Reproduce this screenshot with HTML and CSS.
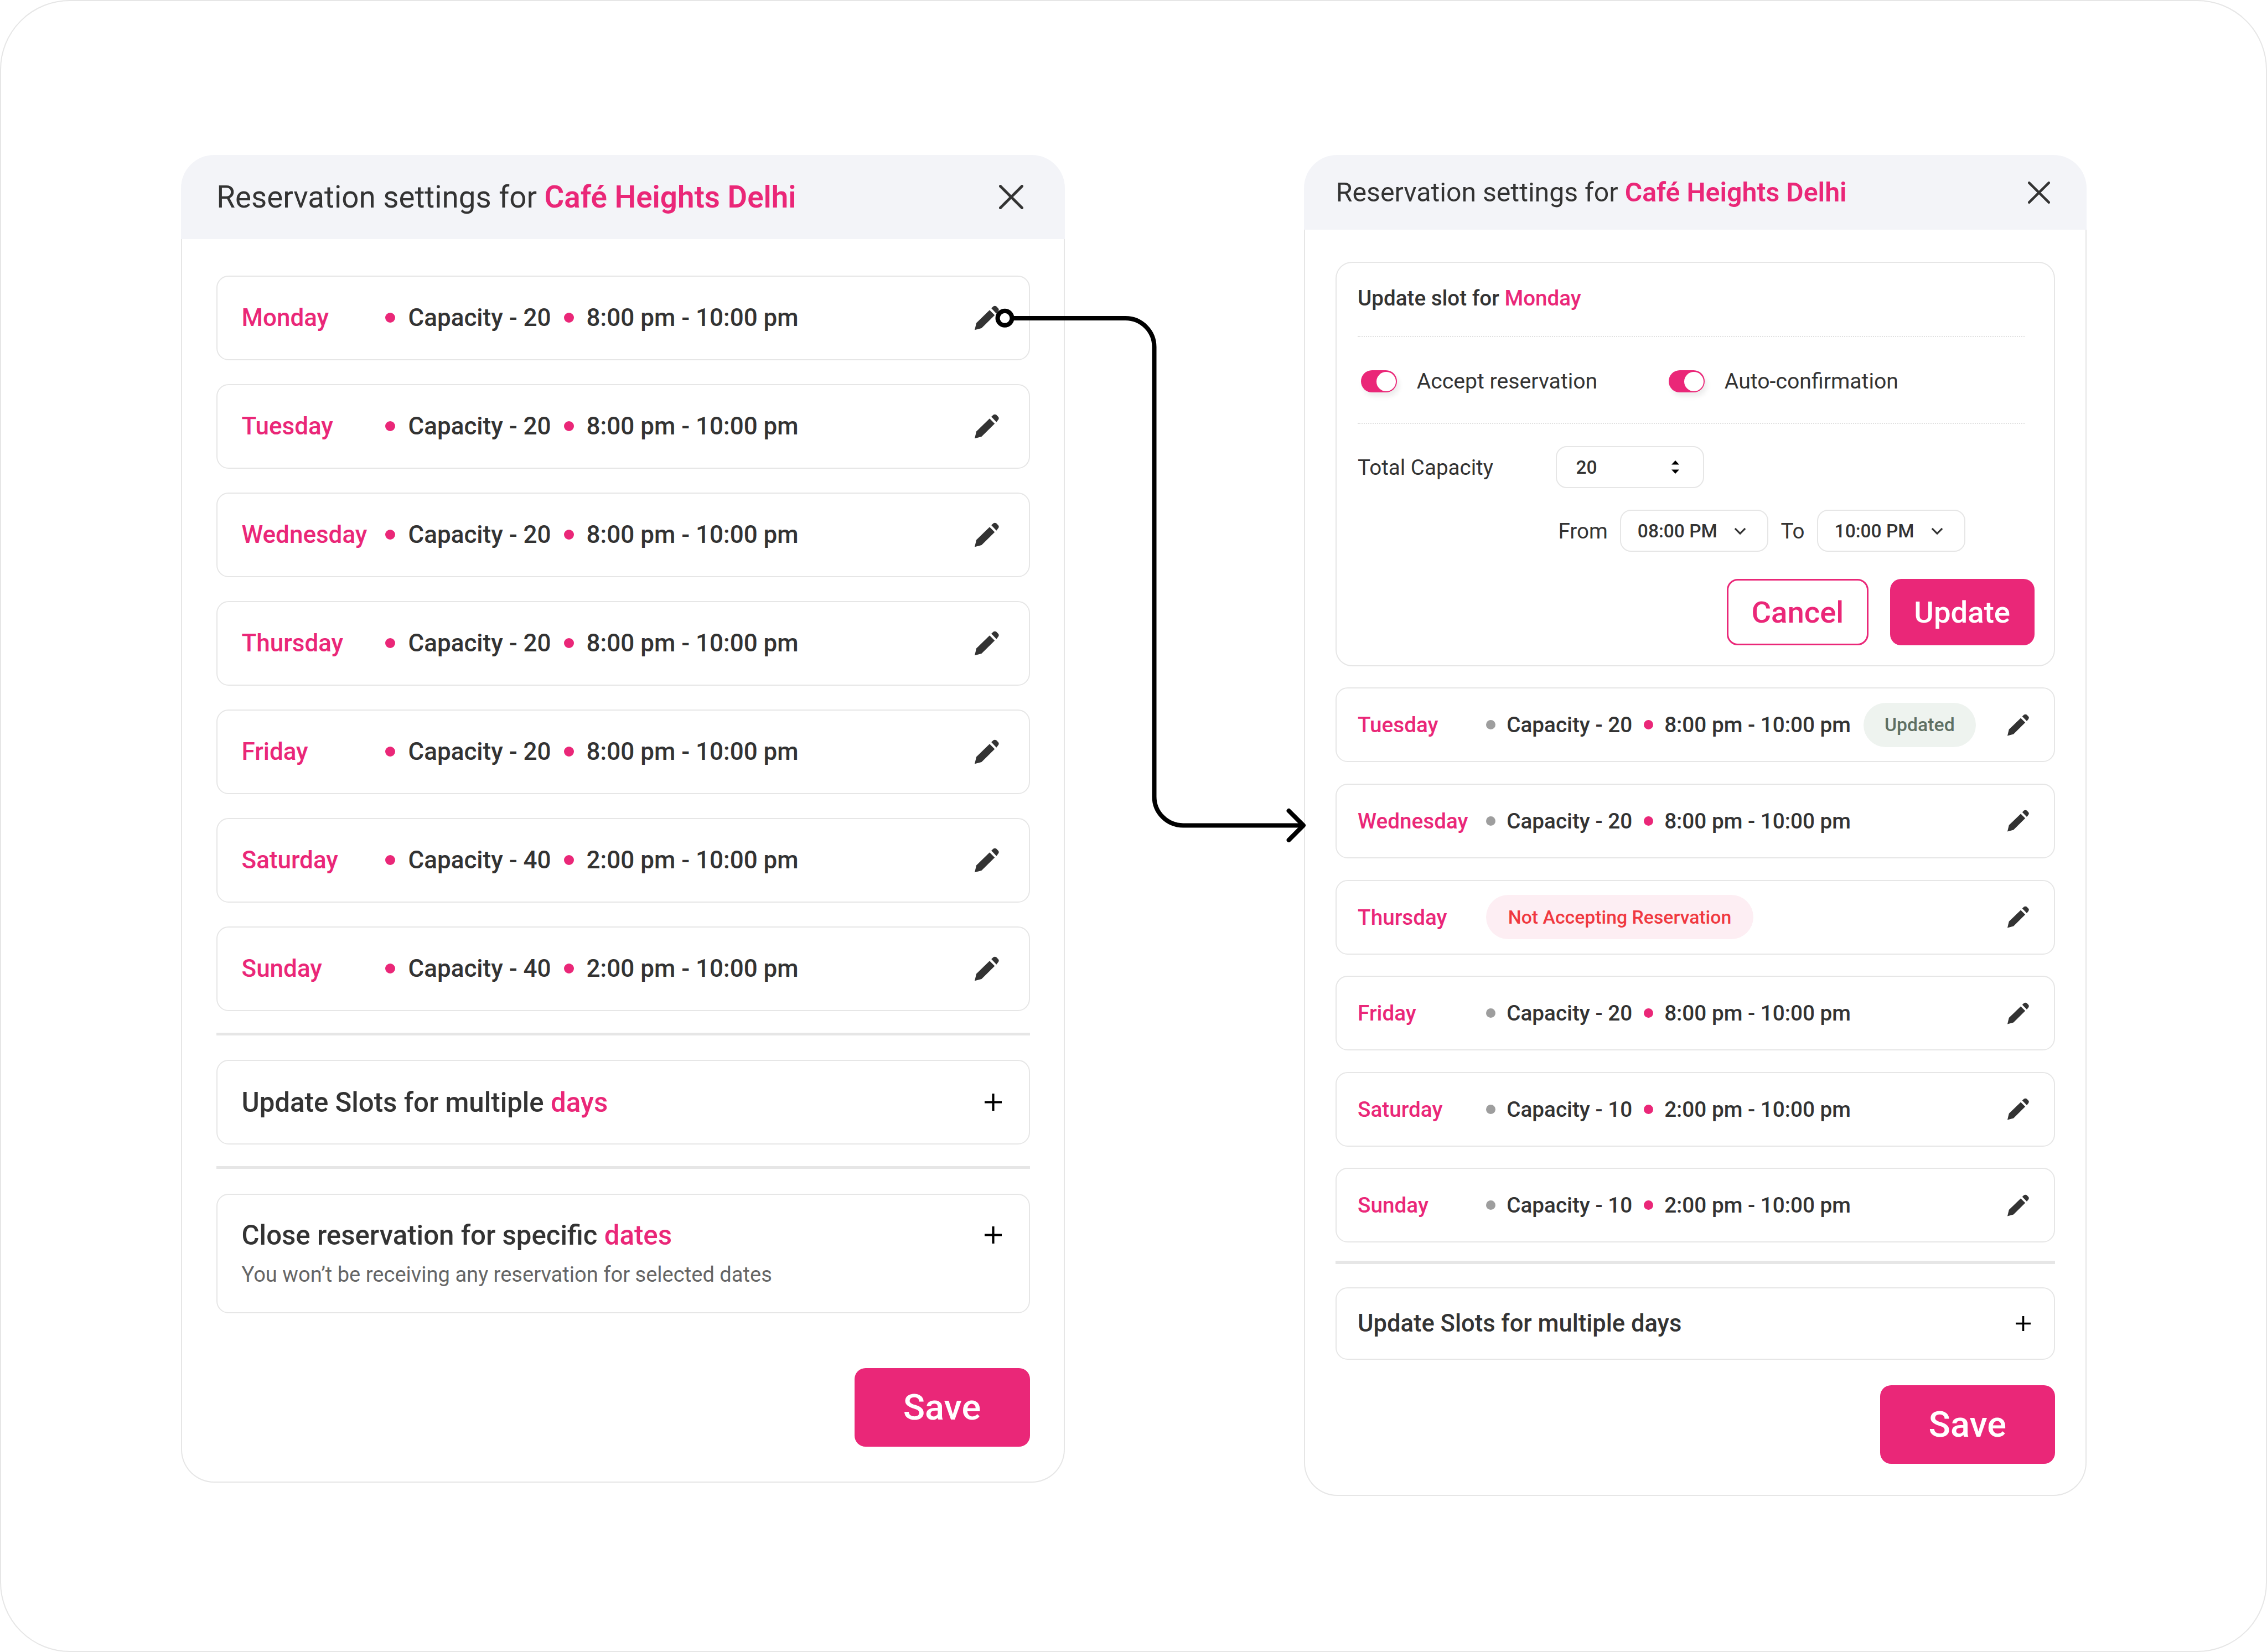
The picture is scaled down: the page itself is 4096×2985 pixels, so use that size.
FILE: index.html
```html
<!DOCTYPE html>
<html lang="en">
<head>
  <meta charset="UTF-8" />
  <meta name="viewport" content="width=device-width, initial-scale=1.0" />
  <title>Reservation settings</title>
  <link rel="stylesheet" href="styles.css">
</head>
<body>
  <svg width="0" height="0" class="defs">
    <symbol id="pencil" viewBox="83 25 200 200">
      <path d="M83 222 L97 165 L203 62 L244 103 L138 207 Z" />
      <path d="M217 47 L232 33 Q245 24 258 33 L272 47 Q282 59 272 72 L258 90 Z" />
    </symbol>
    <symbol id="close" viewBox="0 0 44 44">
      <path d="M2.5 2.5 L41.5 41.5 M41.5 2.5 L2.5 41.5" />
    </symbol>
    <symbol id="plus" viewBox="0 0 30 30">
      <path d="M15 0 V30 M0 15 H30" />
    </symbol>
    <symbol id="chevron" viewBox="0 0 24 14">
      <path d="M2 2 L12 12 L22 2" />
    </symbol>
  </svg>

  <div class="frame">
    <!-- first dialog -->
    <section class="card card-large">
      <header class="card-head">
        <h2>Reservation settings for <b>Café Heights Delhi</b></h2>
        <svg class="icon-close"><use href="#close" /></svg>
      </header>
      <div class="card-body">
        <div class="slots">
          <div class="slot"><span class="day">Monday</span><i class="dot"></i><span>Capacity - 20</span><i class="dot"></i><span>8:00 pm - 10:00 pm</span><svg class="icon-edit"><use href="#pencil" /></svg></div>
          <div class="slot"><span class="day">Tuesday</span><i class="dot"></i><span>Capacity - 20</span><i class="dot"></i><span>8:00 pm - 10:00 pm</span><svg class="icon-edit"><use href="#pencil" /></svg></div>
          <div class="slot"><span class="day">Wednesday</span><i class="dot"></i><span>Capacity - 20</span><i class="dot"></i><span>8:00 pm - 10:00 pm</span><svg class="icon-edit"><use href="#pencil" /></svg></div>
          <div class="slot"><span class="day">Thursday</span><i class="dot"></i><span>Capacity - 20</span><i class="dot"></i><span>8:00 pm - 10:00 pm</span><svg class="icon-edit"><use href="#pencil" /></svg></div>
          <div class="slot"><span class="day">Friday</span><i class="dot"></i><span>Capacity - 20</span><i class="dot"></i><span>8:00 pm - 10:00 pm</span><svg class="icon-edit"><use href="#pencil" /></svg></div>
          <div class="slot"><span class="day">Saturday</span><i class="dot"></i><span>Capacity - 40</span><i class="dot"></i><span>2:00 pm - 10:00 pm</span><svg class="icon-edit"><use href="#pencil" /></svg></div>
          <div class="slot"><span class="day">Sunday</span><i class="dot"></i><span>Capacity - 40</span><i class="dot"></i><span>2:00 pm - 10:00 pm</span><svg class="icon-edit"><use href="#pencil" /></svg></div>
        </div>
        <hr class="divider">
        <div class="slot">
          <span class="row-title">Update Slots for multiple <em>days</em></span>
          <svg class="icon-plus"><use href="#plus" /></svg>
        </div>
        <hr class="divider">
        <div class="slot slot-tall">
          <div class="tall-top">
            <span class="row-title">Close reservation for specific <em>dates</em></span>
            <svg class="icon-plus"><use href="#plus" /></svg>
          </div>
          <p class="row-sub">You won’t be receiving any reservation for selected dates</p>
        </div>
        <div class="save-bar"><button class="btn btn-save">Save</button></div>
      </div>
    </section>

    <!-- second dialog -->
    <section class="card card-small">
      <header class="card-head">
        <h2>Reservation settings for <b>Café Heights Delhi</b></h2>
        <svg class="icon-close"><use href="#close" /></svg>
      </header>
      <div class="card-body">
        <div class="panel">
          <div class="panel-title">Update slot for <em>Monday</em></div>
          <div class="dotted"></div>
          <div class="toggles">
            <div class="toggle-item"><span class="toggle"></span>Accept reservation</div>
            <div class="toggle-item"><span class="toggle"></span>Auto-confirmation</div>
          </div>
          <div class="dotted dotted-low"></div>
          <div class="capacity-row">
            <span class="capacity-label">Total Capacity</span>
            <div class="field field-number">
              <span>20</span>
              <svg class="spinner" viewBox="0 0 14 24"><path d="M7 0 L14 7.5 H0 Z M0 16.5 H14 L7 24 Z" /></svg>
            </div>
          </div>
          <div class="time-row">
            <span>From</span>
            <div class="field"><span>08:00 PM</span><svg class="icon-chevron"><use href="#chevron" /></svg></div>
            <span>To</span>
            <div class="field"><span>10:00 PM</span><svg class="icon-chevron"><use href="#chevron" /></svg></div>
          </div>
          <div class="panel-actions">
            <button class="btn btn-outline">Cancel</button>
            <button class="btn btn-update">Update</button>
          </div>
        </div>

        <div class="slots">
          <div class="slot"><span class="day">Tuesday</span><i class="dot dot-grey"></i><span>Capacity - 20</span><i class="dot"></i><span>8:00 pm - 10:00 pm</span><span class="pill pill-green">Updated</span><svg class="icon-edit"><use href="#pencil" /></svg></div>
          <div class="slot"><span class="day">Wednesday</span><i class="dot dot-grey"></i><span>Capacity - 20</span><i class="dot"></i><span>8:00 pm - 10:00 pm</span><svg class="icon-edit"><use href="#pencil" /></svg></div>
          <div class="slot"><span class="day">Thursday</span><span class="pill pill-red">Not Accepting Reservation</span><svg class="icon-edit"><use href="#pencil" /></svg></div>
          <div class="slot"><span class="day">Friday</span><i class="dot dot-grey"></i><span>Capacity - 20</span><i class="dot"></i><span>8:00 pm - 10:00 pm</span><svg class="icon-edit"><use href="#pencil" /></svg></div>
          <div class="slot"><span class="day">Saturday</span><i class="dot dot-grey"></i><span>Capacity - 10</span><i class="dot"></i><span>2:00 pm - 10:00 pm</span><svg class="icon-edit"><use href="#pencil" /></svg></div>
          <div class="slot"><span class="day">Sunday</span><i class="dot dot-grey"></i><span>Capacity - 10</span><i class="dot"></i><span>2:00 pm - 10:00 pm</span><svg class="icon-edit"><use href="#pencil" /></svg></div>
        </div>
        <hr class="divider">
        <div class="slot slot-multi">
          <span class="row-title">Update Slots for multiple days</span>
          <svg class="icon-plus"><use href="#plus" /></svg>
        </div>
        <div class="save-bar"><button class="btn btn-save">Save</button></div>
      </div>
    </section>

    <!-- connector between the two dialogs -->
    <svg class="connector" viewBox="0 0 4096 2985">
      <circle cx="1816.5" cy="575.8" r="13" />
      <path d="M1830 576 H2034.5 A52 52 0 0 1 2086.5 628 V1440.4 A52 52 0 0 0 2138.5 1492.4 H2355" />
      <path d="M2329.6 1466 L2356 1492.4 L2329.6 1518.8" />
    </svg>
  </div>
</body>
</html>
```

FILE: styles.css
```css
* {
  box-sizing: border-box;
}
body {
  margin: 0;
  background: #ffffff;
  font-family: Roboto, "Liberation Sans", sans-serif;
  color: #333333;
}
.defs {
  position: absolute;
}
em {
  font-style: normal;
  color: #ea2778;
}
.frame {
  position: relative;
  width: 4096px;
  height: 2985px;
  border: 2.7px solid #e6e6e6;
  border-radius: 126px;
  padding: 277.8px 0 0 324.8px;
  display: flex;
  align-items: flex-start;
  gap: 432px;
}
.connector {
  position: absolute;
  left: -2.7px;
  top: -2.7px;
  width: 4096px;
  height: 2985px;
  fill: none;
  stroke: #000000;
  stroke-width: 8px;
  stroke-linecap: round;
  stroke-linejoin: round;
}

/* dialogs */
.card {
  flex: none;
}
.card-large {
  width: 1597.5px;
}
.card-small {
  width: 1413.5px;
}
.card-head {
  display: flex;
  align-items: center;
  justify-content: space-between;
  background: #f3f4f8;
  border-radius: 60px 60px 0 0;
}
.card-head h2 {
  margin: 0;
  font-weight: 400;
}
.card-head b {
  font-weight: 600;
  color: #ea2778;
}
.card-body {
  border: 2.7px solid #e6e6e6;
  border-top: none;
  border-radius: 0 0 60px 60px;
}
.card-large .card-head {
  height: 152.5px;
  padding: 0 75px 0 64.5px;
}
.card-large h2 {
  font-size: 54.7px;
}
.card-large .card-body {
  padding: 65.6px 61.8px 63px;
}
.card-small .card-head {
  height: 135.5px;
  padding: 0 65.5px 0 57.5px;
}
.card-small h2 {
  font-size: 48.2px;
}
.card-small .card-body {
  padding: 57.5px 54.9px 56px;
}
.icon-close {
  flex: none;
  fill: none;
  stroke: #333333;
  stroke-width: 5px;
  stroke-linecap: round;
}
.card-large .icon-close {
  width: 44px;
  height: 44px;
}
.card-small .icon-close {
  width: 40px;
  height: 40px;
}

/* rows */
.slots {
  display: flex;
  flex-direction: column;
}
.slot {
  display: flex;
  align-items: center;
  background: #ffffff;
  border: 2.7px solid #e6e6e6;
  border-radius: 22px;
  font-weight: 500;
}
.card-large .slots {
  gap: 42.8px;
}
.card-large .slot {
  height: 153.2px;
  padding: 0 52.3px 0 43.9px;
  gap: 23px;
  font-size: 44px;
}
.card-small .slots {
  gap: 38.6px;
}
.card-small .slot {
  height: 135px;
  padding: 0 44.3px 0 37.9px;
  gap: 20.5px;
  font-size: 38.7px;
}
.day {
  color: #ea2778;
}
.card-large .day {
  width: 260px;
}
.card-large .day + .dot {
  margin-left: -23px;
}
.card-small .day {
  width: 231.6px;
}
.card-small .day + .dot {
  margin-left: -20.5px;
}
.card-small .day + .pill {
  margin-left: -20.5px;
}
.dot {
  flex: none;
  width: 18px;
  height: 18px;
  border-radius: 50%;
  background: #ea2778;
}
.card-small .dot {
  width: 17px;
  height: 17px;
}
.card-small .dot-grey {
  background: #9e9e9e;
}
.icon-edit {
  flex: none;
  margin-left: auto;
  fill: #333333;
}
.card-large .icon-edit {
  width: 45px;
  height: 45px;
}
.card-small .icon-edit {
  width: 40px;
  height: 40px;
}
.pill {
  display: flex;
  align-items: center;
  height: 80px;
  border-radius: 40px;
  padding: 0 38px;
  font-size: 33.8px;
  font-weight: 500;
}
.pill-green {
  background: #eef3ef;
  color: #5f6f62;
  margin-left: 2.5px;
}
.pill-red {
  background: #fdeef3;
  color: #f0383f;
  padding: 0 40px;
}
.divider {
  height: 5.4px;
  border: none;
  background: #e6e6e6;
}
.card-large .divider {
  margin: 38.6px 0 44.3px;
}
.card-small .divider {
  margin: 33px 0 42.6px;
}
.row-title {
  color: #333333;
}
.card-large .row-title {
  font-size: 49.2px;
}
.card-small .row-title {
  font-size: 43.5px;
}
.icon-plus {
  flex: none;
  margin-left: auto;
  fill: none;
  stroke: #000000;
  stroke-width: 4px;
}
.card-large .icon-plus {
  width: 31px;
  height: 31px;
  margin-right: -4px;
}
.card-small .icon-plus {
  width: 27px;
  height: 27px;
  margin-right: -2.6px;
}
.card-small .slot-multi {
  height: 131px;
}
.card-large .slot-tall {
  display: block;
  height: 216px;
  padding-top: 44.5px;
}
.tall-top {
  display: flex;
  align-items: center;
  height: 57px;
}
.row-sub {
  margin: 20.5px 0 0;
  font-size: 38.1px;
  line-height: 44px;
  font-weight: 400;
  color: #666666;
}

/* buttons */
.btn {
  border: none;
  font-family: inherit;
  font-weight: 500;
  border-radius: 20px;
  background: #ea2778;
  color: #ffffff;
  padding: 0;
}
.btn-save {
  height: 142px;
  font-size: 65px;
}
.save-bar {
  display: flex;
  justify-content: flex-end;
}
.card-large .save-bar {
  margin-top: 99px;
}
.card-large .btn-save {
  width: 317px;
}
.card-small .save-bar {
  margin-top: 46px;
}
.card-small .btn-save {
  width: 316px;
}

/* update panel */
.panel {
  border: 2.7px solid #e6e6e6;
  border-radius: 30px;
  padding: 41.8px 35.3px 36.2px 37.9px;
  margin-bottom: 38.5px;
  font-size: 38.6px;
}
.panel-title {
  font-weight: 500;
  line-height: 44px;
}
.dotted {
  margin: 46.5px 18px 0 0;
  border-top: 2.7px dotted #e0e0e0;
}
.dotted-low {
  margin-top: 55px;
}
.toggles {
  display: flex;
  gap: 129px;
  margin: 60px 0 0 6px;
  height: 40px;
  font-size: 39.2px;
}
.toggle-item {
  display: flex;
  align-items: center;
  gap: 35.6px;
}
.toggle {
  position: relative;
  flex: none;
  width: 65px;
  height: 40px;
  border-radius: 20px;
  background: #ea2778;
  box-shadow: 4px 7px 10px rgba(0, 0, 0, 0.08);
}
.toggle::after {
  content: "";
  position: absolute;
  right: 2.5px;
  top: 2.5px;
  width: 35px;
  height: 35px;
  border-radius: 50%;
  background: #ffffff;
}
.capacity-row {
  display: flex;
  align-items: center;
  margin-top: 40px;
}
.capacity-label {
  width: 357.5px;
}
.field {
  display: flex;
  align-items: center;
  justify-content: space-between;
  width: 268.6px;
  height: 76px;
  border: 2.7px solid #e6e6e6;
  border-radius: 20px;
  padding: 0 38px 0 30px;
  font-size: 33.5px;
  font-weight: 500;
}
.field-number {
  padding: 0 43px 0 35px;
}
.spinner {
  width: 14px;
  height: 24px;
  fill: #000000;
}
.icon-chevron {
  width: 22px;
  height: 13px;
  fill: none;
  stroke: #333333;
  stroke-width: 3.5px;
}
.time-row {
  display: flex;
  align-items: center;
  gap: 22px;
  margin: 39px 0 0 362.4px;
}
.panel-actions {
  display: flex;
  justify-content: flex-end;
  gap: 39px;
  margin-top: 48.6px;
}
.panel-actions .btn {
  height: 120px;
  font-size: 54.5px;
}
.btn-outline {
  width: 255.5px;
  background: #ffffff;
  color: #ea2778;
  border: 3px solid #ea2778;
}
.btn-update {
  width: 261px;
}
```
